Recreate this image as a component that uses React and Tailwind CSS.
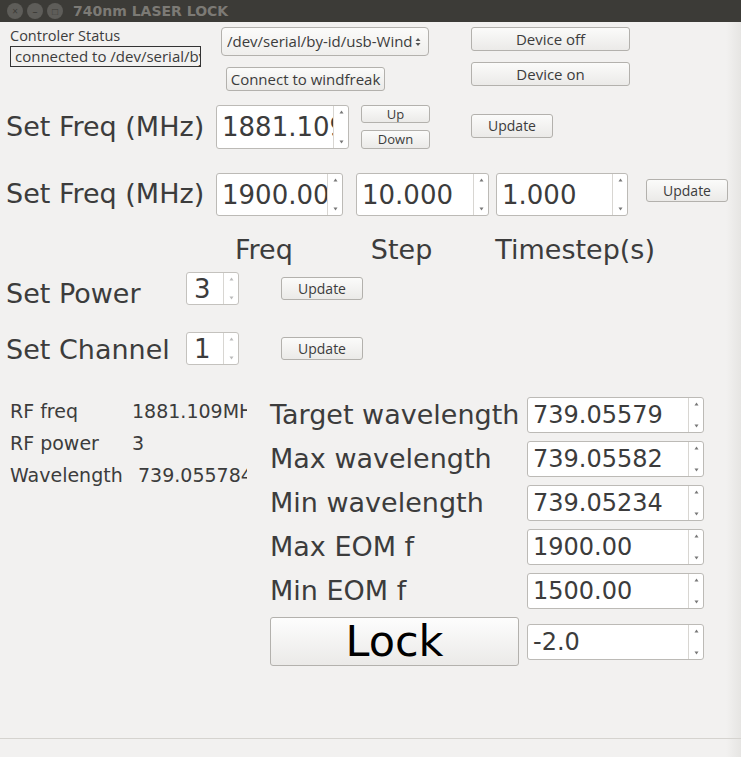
import React from 'react';

const big = "font-['DejaVu_Sans',sans-serif] text-[#3c3c3c]";
const small = "font-['Open_Sans','DejaVu_Sans',sans-serif] text-[#3c3c3c]";

function Arrows({ dim }) {
  return (
    <div className="flex h-full w-[15px] flex-col items-center justify-between border-l border-[#d8d6d2] py-[4px]">
      <svg width="5" height="4" viewBox="0 0 5 4"><path d="M2.5 0.5 L4.5 3.5 L0.5 3.5 Z" fill={dim ? '#bbb' : '#777'} /></svg>
      <svg width="5" height="4" viewBox="0 0 5 4"><path d="M0.5 0.5 L4.5 0.5 L2.5 3.5 Z" fill={dim ? '#bbb' : '#777'} /></svg>
    </div>
  );
}

function Spin({ value, className, text = 'text-[24px]' }) {
  return (
    <div className={`flex shrink-0 overflow-hidden rounded-[3px] border border-[#bcbab6] bg-white ${className}`}>
      <div className={`flex-1 overflow-hidden whitespace-nowrap pl-[5px] leading-none flex items-center ${big} text-[#2e2e2e] ${text}`}>{value}</div>
      <Arrows />
    </div>
  );
}

function Btn({ children, className, text = 'text-[14px]' }) {
  return (
    <button className={`flex shrink-0 items-center justify-center rounded-[3px] border border-[#b3b1ad] bg-gradient-to-b from-[#fbfbfa] to-[#ebeae8] leading-none ${small} ${text} ${className}`}>
      {children}
    </button>
  );
}

export default function App() {
  return (
    <div className="flex h-[757px] w-[741px] flex-col overflow-hidden bg-[#f2f1f0]">
      <div className="flex h-[22px] shrink-0 items-center bg-[#3c3b37] pl-[7px]">
        <div className="flex gap-[4px]">
          {['×', '–', '□'].map((c) => (
            <div key={c} className="flex h-[16px] w-[16px] items-center justify-center rounded-full bg-[#5e5d59] text-[10px] leading-none text-[#3c3b37]">{c}</div>
          ))}
        </div>
        <div className="ml-[10px] font-['DejaVu_Sans',sans-serif] text-[14px] font-bold text-[#7c7a75]">740nm LASER LOCK</div>
      </div>

      <div className="relative flex-1 bg-gradient-to-r from-[#f2f1f0] from-[98%] to-[#e6e5e3]">
        {/* top controls */}
        <div className="flex h-[80px] pt-[5px]">
          <div className="w-[211px] pl-[10px]">
            <div className={`${small} text-[14.5px] leading-[17px]`}>Controler Status</div>
            <div className={`mt-[2px] h-[21px] w-[191px] overflow-hidden whitespace-nowrap border border-[#333] pl-[4px] text-[15px] leading-[19px] ${small}`}>connected to /dev/serial/by-id/usb-Windfreak</div>
          </div>
          <div className="ml-[10px] w-[208px]">
            <div className="flex h-[29px] items-center rounded-[4px] border border-[#b3b1ad] bg-gradient-to-b from-[#fbfbfa] to-[#efeeec] pl-[5px]">
              <div className={`flex-1 overflow-hidden whitespace-nowrap text-[15px] ${small}`}>/dev/serial/by-id/usb-Windfreak</div>
              <svg width="12" height="14" viewBox="0 0 12 14" className="mr-[4px]"><path d="M6 3 L8.5 6 L3.5 6 Z M3.5 8 L8.5 8 L6 11 Z" fill="#555" /></svg>
            </div>
            <Btn className="ml-[5px] mt-[11px] h-[24px] w-[159px]" text="text-[15px]">Connect to windfreak</Btn>
          </div>
          <div className="ml-[42px] flex flex-col gap-[11px]">
            <Btn className="h-[24px] w-[159px]" text="text-[15px]">Device off</Btn>
            <Btn className="h-[24px] w-[159px]" text="text-[15px]">Device on</Btn>
          </div>
        </div>

        {/* set freq row 1 */}
        <div className="mt-[3px] flex h-[44px] items-center">
          <div className={`w-[216px] shrink-0 whitespace-nowrap pl-[6px] text-[27px] ${big}`}>Set Freq (MHz)</div>
          <Spin value="1881.109000" className="h-[44px] w-[133px]" text="text-[26px]" />
          <div className="ml-[12px] flex flex-col gap-[7px]">
            <Btn className="h-[18px] w-[69px]" text="text-[13px]">Up</Btn>
            <Btn className="h-[19px] w-[69px]" text="text-[13px]">Down</Btn>
          </div>
          <Btn className="ml-[41px] mt-[-2px] h-[24px] w-[82px]">Update</Btn>
        </div>

        {/* set freq row 2 */}
        <div className="mt-[24px] flex h-[43px] items-center">
          <div className={`w-[216px] shrink-0 whitespace-nowrap pl-[6px] text-[27px] ${big}`}>Set Freq (MHz)</div>
          <Spin value="1900.000000" className="h-[43px] w-[127px]" text="text-[26px]" />
          <Spin value="10.000" className="ml-[13px] h-[43px] w-[133px]" text="text-[26px]" />
          <Spin value="1.000" className="ml-[7px] h-[43px] w-[132px]" text="text-[26px]" />
          <Btn className="ml-[18px] mt-[-8px] h-[23px] w-[82px]">Update</Btn>
        </div>

        {/* column labels */}
        <div className={`mt-[17px] flex h-[34px] items-center text-[27px] ${big}`}>
          <div className="ml-[235px]">Freq</div>
          <div className="ml-[78px]">Step</div>
          <div className="ml-[63px]">Timestep(s)</div>
        </div>

        {/* power */}
        <div className="mt-[5px] flex h-[33px] items-center">
          <div className={`w-[186px] shrink-0 pl-[6px] pt-[12px] text-[27px] ${big}`}>Set Power</div>
          <div className="flex h-[33px] w-[53px] overflow-hidden rounded-[3px] border border-[#c4c2be] bg-white">
            <div className={`flex flex-1 items-center pl-[7px] text-[26px] leading-none ${big} text-[#2e2e2e]`}>3</div>
            <Arrows dim />
          </div>
          <Btn className="ml-[42px] h-[23px] w-[82px]">Update</Btn>
        </div>

        {/* channel */}
        <div className="mt-[27px] flex h-[33px] items-center">
          <div className={`w-[186px] shrink-0 whitespace-nowrap pl-[6px] pt-[3px] text-[27px] ${big}`}>Set Channel</div>
          <div className="flex h-[33px] w-[53px] overflow-hidden rounded-[3px] border border-[#c4c2be] bg-white">
            <div className={`flex flex-1 items-center pl-[7px] text-[26px] leading-none ${big} text-[#2e2e2e]`}>1</div>
            <Arrows dim />
          </div>
          <Btn className="ml-[42px] h-[23px] w-[82px]">Update</Btn>
        </div>

        {/* bottom section */}
        <div className="mt-[30px] flex">
          <div className={`w-[247px] shrink-0 pl-[10px] text-[19px] ${big}`}>
            <div className="flex h-[32px] items-center">
              <div className="w-[122px] shrink-0">RF freq</div>
              <div className="min-w-0 overflow-hidden whitespace-nowrap">1881.109MHz</div>
            </div>
            <div className="flex h-[32px] items-center">
              <div className="w-[122px] shrink-0">RF power</div>
              <div>3</div>
            </div>
            <div className="flex h-[32px] items-center">
              <div className="w-[116px] shrink-0 overflow-hidden whitespace-nowrap">Wavelength</div>
              <div className="ml-[12px] min-w-0 overflow-hidden whitespace-nowrap">739.055784</div>
            </div>
          </div>
          <div className="ml-[23px] mt-[2px] flex flex-col gap-[8px]">
            {[
              ['Target wavelength', '739.05579'],
              ['Max wavelength', '739.05582'],
              ['Min wavelength', '739.05234'],
              ['Max EOM f', '1900.00'],
              ['Min EOM f', '1500.00'],
            ].map(([l, v]) => (
              <div key={l} className="flex h-[36px] items-center">
                <div className={`w-[257px] shrink-0 whitespace-nowrap text-[27px] ${big}`}>{l}</div>
                <Spin value={v} className="h-[36px] w-[177px]" />
              </div>
            ))}
            <div className="flex items-start">
              <button className="flex h-[49px] w-[249px] shrink-0 items-center justify-center rounded-[3px] border border-[#b3b1ad] bg-gradient-to-b from-[#fdfdfd] to-[#ebeae8] font-['DejaVu_Sans',sans-serif] text-[43px] leading-none text-black">Lock</button>
              <Spin value="-2.0" className="ml-[8px] mt-[7px] h-[36px] w-[177px]" />
            </div>
          </div>
        </div>

        <div className="absolute bottom-[18px] left-0 right-0 border-t border-[#d5d3cf]" />
      </div>
    </div>
  );
}
